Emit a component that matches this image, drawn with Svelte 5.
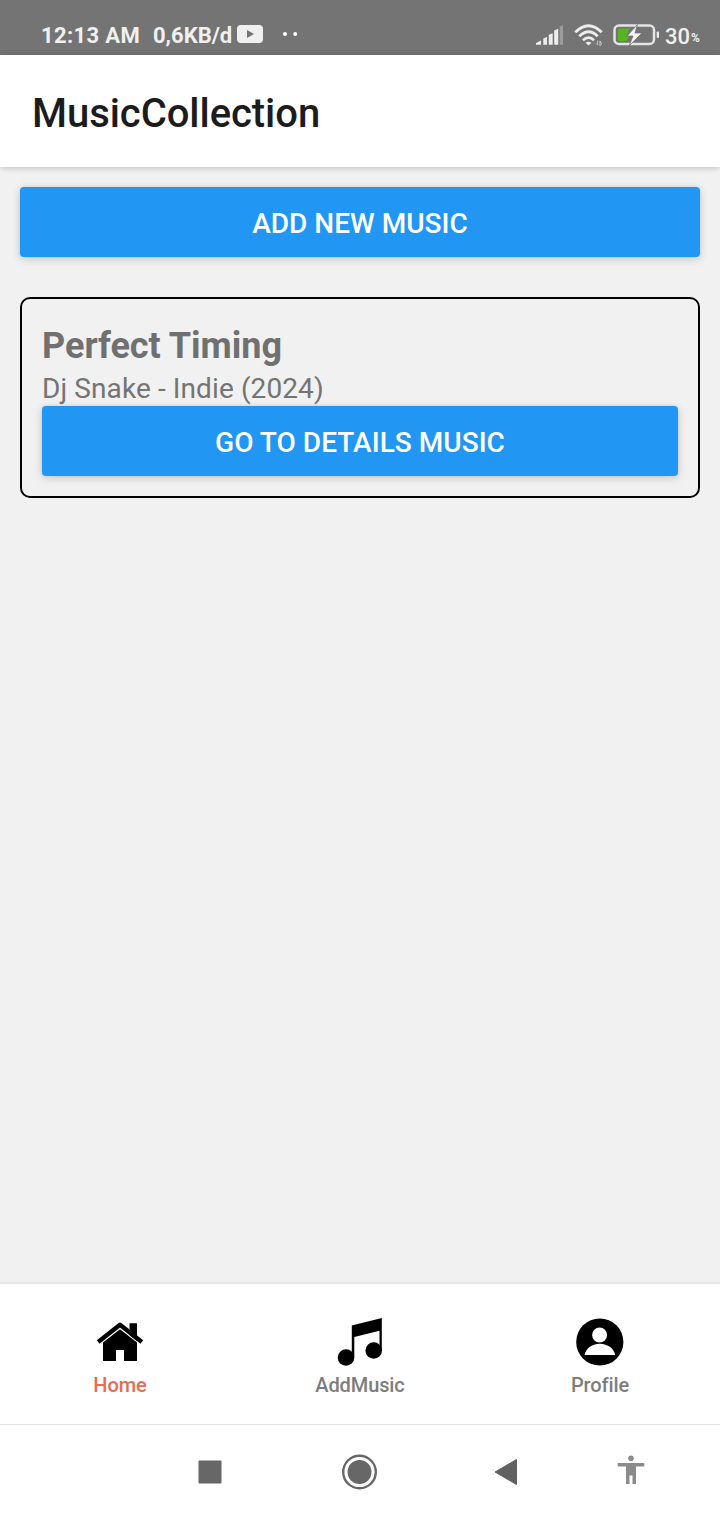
<script>
  const music = [{ title: 'Perfect Timing', artist: 'Dj Snake', genre: 'Indie', year: 2024 }];
  const tabs = [
    { id: 'home', label: 'Home' },
    { id: 'add', label: 'AddMusic' },
    { id: 'profile', label: 'Profile' }
  ];
  let active = $state('home');
</script>

<div class="screen">
  <div class="status">
    <span class="clock">12:13 AM</span>
    <span class="speed">0,6KB/d</span>
    <svg class="video" width="26" height="18" viewBox="0 0 26 18">
      <rect width="26" height="18" rx="4" fill="#f0f0f0" />
      <path d="M10 5v8l7-4z" fill="#747474" />
    </svg>
    <svg class="dots" width="15" height="4" viewBox="0 0 15 4" fill="#fff">
      <circle cx="2" cy="2" r="2" /><circle cx="12.2" cy="2" r="2" />
    </svg>
    <div class="indicators">
      <svg width="28" height="22" viewBox="0 0 28 22" fill="#ededed">
        <path d="M0 20.800v-1.800l5-2.500v4.300zM7.300 14.500l3.700-1.500v7.800H7.300zM12.800 10.800l3.900-1.500v11.500h-3.900zM18.200 6.500l4-1.700v16h-4z" />
        <path d="M23.700 2.500l3.300-1.300v19.600h-3.300z" fill="#9b9b9b" />
      </svg>
      <svg class="wifi" width="30" height="24" viewBox="0 0 30 24">
        <g fill="none" stroke="#ededed" stroke-width="2.700">
          <path d="M1.300 9.300Q14.500-3.700 27.700 9.300" />
          <path d="M5.300 13.300Q14.500 4.300 23.700 13.300" />
          <path d="M9 17.200Q14.500 12 20 17.200" />
        </g>
        <path d="M11.500 19.800q3-2.200 6 0L14.500 22.500z" fill="#ededed" />
        <path d="M23.700 17.500v4.500l-1.500-1.500M26 23v-5l1.300 2v1.500z" fill="none" stroke="#c4c4c4" stroke-width="1" />
      </svg>
      <svg class="battery" width="47" height="24" viewBox="0 0 47 24">
        <rect x="1.500" y="2.500" width="39.500" height="18.500" rx="4.500" fill="none" stroke="#e4e4e4" stroke-width="2.500" />
        <path d="M6.500 5.500H17l-4 7h3l-2 5.500H6.500q-1.500 0-1.500-1.500V7q0-1.500 1.500-1.500z" fill="#55b51e" />
        <path d="M24.500 1.500L14 13h6l-4 10L29 10h-7z" fill="#f4f4f4" stroke="#747474" stroke-width=".8" />
        <rect x="43.700" y="8.500" width="2.300" height="6.500" rx=".8" fill="#ededed" />
      </svg>
      <span class="level">30</span><span class="percent">%</span>
    </div>
  </div>

  <header><h1>MusicCollection</h1></header>

  <main>
    <button class="action"><span>ADD NEW MUSIC</span></button>
    {#each music as item}
      <article>
        <h2>{item.title}</h2>
        <p>{item.artist} - {item.genre} ({item.year})</p>
        <button class="action"><span>GO TO DETAILS MUSIC</span></button>
      </article>
    {/each}
  </main>

  <nav class="tabs">
    {#each tabs as tab}
      <button class="tab" class:active={active === tab.id} onclick={() => (active = tab.id)}>
        <svg width="50" height="50" viewBox="0 0 50 50">
          {#if tab.id === 'home'}
            <path d="M34.500 18V6.200h7.500v18z" />
            <path d="M3.200 25L25 7.800 46.800 25" fill="none" stroke="#000" stroke-width="4.400" stroke-linejoin="round" />
            <path d="M8 25.500L25 12.300l17 13.200V44H29V33h-8v11H8z" />
          {:else if tab.id === 'add'}
            <path d="M16.800 8.500L46.800 1v33h-2.300V13.700L19.300 20v20h-2.500z" />
            <circle cx="11" cy="40.500" r="8.300" /><circle cx="38.700" cy="33.500" r="8.300" />
          {:else}
            <circle cx="24.800" cy="25" r="23.600" />
            <circle cx="24.600" cy="18" r="7.500" fill="#fff" />
            <path d="M9.600 38c1-6 7-11.200 15.200-11.200S39.200 32 40.200 38z" fill="#fff" />
          {/if}
        </svg>
        <span>{tab.label}</span>
      </button>
    {/each}
  </nav>

  <div class="system">
    <svg width="24" height="24" viewBox="0 0 24 24"><rect x=".5" y=".5" width="23" height="23" rx="1" fill="#676767" /></svg>
    <svg width="36" height="36" viewBox="0 0 36 36">
      <circle cx="18.500" cy="18" r="16.300" fill="none" stroke="#676767" stroke-width="2.400" />
      <circle cx="18.500" cy="18" r="12" fill="#676767" />
    </svg>
    <svg width="24" height="28" viewBox="0 0 24 28"><path d="M1 14L22.500 1.500v25z" fill="#606060" stroke="#606060" stroke-linejoin="round" /></svg>
    <svg class="access" width="28" height="30" viewBox="0 0 28 30" fill="#8b8b8b">
      <circle cx="14" cy="3.200" r="2.800" />
      <path d="M.7 8h26.600v3.500H19V29h-3.500v-8.500h-3V29H9V11.500H.7z" />
    </svg>
  </div>
</div>

<style>
  :global(body) { margin: 0; }
  * { box-sizing: border-box; }
  .screen {
    width: 720px;
    height: 1520px;
    display: flex;
    flex-direction: column;
    overflow: hidden;
    background: #f1f1f1;
    font-family: Roboto, sans-serif;
  }
  svg { display: block; flex: none; }
  button { font-family: inherit; border: 0; padding: 0; cursor: pointer; }
  h1, h2, p { margin: 0; white-space: nowrap; }
  .status {
    height: 55px;
    flex: none;
    display: flex;
    align-items: center;
    padding: 14px 19px 0 41px;
    background: #747474;
    color: #f0f0f0;
    white-space: nowrap;
  }
  .clock, .speed { font-size: 22px; font-weight: 700; line-height: 28px; padding-top: 2px; }
  .clock { width: 112px; letter-spacing: .35px; }
  .speed { width: 84px; }
  .video { margin-top: -1px; }
  .dots { margin: -1px 0 0 20px; }
  .indicators { margin-left: auto; display: flex; align-items: center; height: 28px; }
  .wifi { margin-left: 10px; }
  .battery { margin-left: 9px; }
  .level { width: 26px; margin-left: 5px; font-size: 22px; font-weight: 500; line-height: 28px; padding-top: 4px; }
  .percent { width: 10px; font-size: 12px; font-weight: 700; padding-top: 7px; }
  header {
    height: 112px;
    flex: none;
    display: flex;
    align-items: center;
    padding: 4px 32px 0;
    background: #fff;
    box-shadow: 0 1px 6px rgba(0, 0, 0, .22);
  }
  h1 { font-size: 40px; font-weight: 500; color: #1c1c1e; letter-spacing: -.05px; }
  main { flex: 1; padding: 20px; }
  .action {
    display: block;
    width: 100%;
    height: 70px;
    padding-top: 3px;
    border-radius: 4px;
    background: #2196f3;
    color: #fff;
    font-size: 28px;
    font-weight: 500;
    letter-spacing: .03px;
    box-shadow: 0 2px 8px rgba(0, 0, 0, .18), 0 0 3px rgba(0, 0, 0, .08);
  }
  article {
    height: 201px;
    margin-top: 40px;
    padding: 23px 20px 20px;
    border: 2px solid #000;
    border-radius: 10px;
  }
  h2 { font-size: 36px; line-height: 48px; font-weight: 700; color: #707070; }
  p { font-size: 28px; line-height: 34px; padding-top: 2px; letter-spacing: .1px; color: #747474; }
  .tabs {
    height: 142px;
    flex: none;
    display: grid;
    grid-template-columns: repeat(3, 1fr);
    background: #fff;
    border-top: 2px solid #e6e6e6;
  }
  .tab {
    display: flex;
    flex-direction: column;
    align-items: center;
    padding-top: 33px;
    background: none;
    color: #7d7d7d;
    font-size: 20px;
    font-weight: 500;
    line-height: 24px;
    letter-spacing: -.1px;
  }
  .tab span { margin-top: 6px; }
  .active { color: #e96b50; }
  .system {
    height: 96px;
    flex: none;
    display: grid;
    grid-template-columns: 135px 164px 129px 122px;
    justify-content: start;
    padding: 0 0 1px 142px;
    align-items: center;
    justify-items: center;
    background: #fff;
    border-top: 1px solid #e2e2e2;
  }
  .access { margin-top: -4px; }
</style>
